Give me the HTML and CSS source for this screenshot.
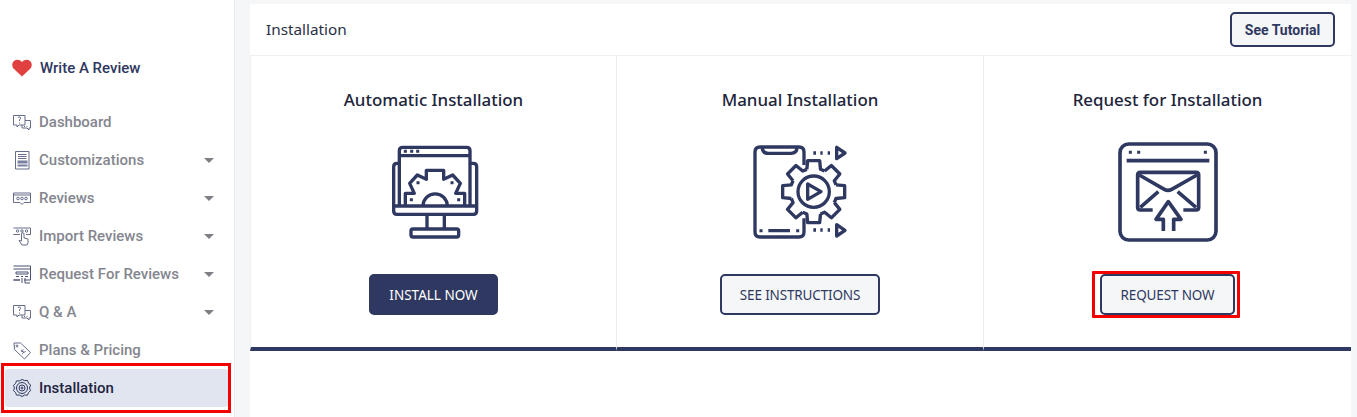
FILE: index.html
```html
<!DOCTYPE html>
<html lang="en">
<head>
<meta charset="utf-8">
<title>Installation</title>
<link rel="stylesheet" href="styles.css">
</head>
<body>
<aside class="sidebar">
  <a class="write-row">
    <svg class="heart" viewBox="0 0 20 18"><path d="M10 17.600 1.800 9.700C-.4 7.400-.1 3.800 2 2 4.300.1 7.700.400 10 3c2.300-2.600 5.700-2.900 8-1 2.100 1.800 2.400 5.400.2 7.700z"/></svg>
    <span>Write A Review</span>
  </a>
  <nav class="menu">
    <a class="item">
      <svg class="ico" viewBox="0 0 20 20"><path d="M1.500 3.500h11.500v9.500H7l-2 2v-2H1.500z"/><path d="M13 8.500h5.500V16H17v2l-2-2h-5v-3"/><path d="M6 6a1.300 1.300 0 1 1 1.500 1.500V9M7.500 10.500v1M12 14.500h1M14.500 14.500h1"/></svg>
      <span class="label">Dashboard</span>
    </a>
    <a class="item">
      <svg class="ico" viewBox="0 0 20 20"><path d="M3.500 1.500h13.500v17.500H3.500z"/><path d="M6 4.500h8.500M6 6.500h8.500M6 8.500h8.500"/><path class="fill" d="M5.500 10.500h10v3h-10zM5.500 14.500h10v2h-10z"/></svg>
      <span class="label">Customizations</span><i class="caret"></i>
    </a>
    <a class="item">
      <svg class="ico" viewBox="0 0 20 20"><path d="M1.500 5h17v9.500h-6.500L10 16.500 8 14.500H1.500z"/><path d="M1.500 7h17"/><circle cx="6" cy="10.500" r="1.300"/><circle cx="10" cy="10.500" r="1.300"/><circle cx="14" cy="10.500" r="1.300"/></svg>
      <span class="label">Reviews</span><i class="caret"></i>
    </a>
    <a class="item">
      <svg class="ico" viewBox="0 0 20 20"><path d="M1.500 2h17v6.500H14M8 8.500H1.500z"/><circle cx="5.500" cy="5" r="1.200"/><circle cx="10" cy="5" r="1.200"/><circle cx="14.500" cy="5" r="1.200"/><path d="M9.500 15V8a1.200 1.200 0 0 1 2.500 0v4l4 1v4l-1 2h-5l-3-4.500z"/></svg>
      <span class="label">Import Reviews</span><i class="caret"></i>
    </a>
    <a class="item">
      <svg class="ico ico-dark" viewBox="0 0 20 20"><path d="M1.500 2h17v14H12M8 16H1.500z"/><path d="M1.500 5h17"/><path d="M4 8h12v2H4zM4 12.500h3M9 12.500h2M13 12.500h3"/><path d="M10 14v5M13 14v5h5"/></svg>
      <span class="label">Request For Reviews</span><i class="caret"></i>
    </a>
    <a class="item">
      <svg class="ico" viewBox="0 0 20 20"><path d="M1.500 3.500h11.500v9.500H7l-2 2v-2H1.500z"/><path d="M13 8.500h5.500V16H17v2l-2-2h-5v-3"/><path d="M6 6a1.300 1.300 0 1 1 1.500 1.500V9M7.500 10.500v1M12 14.500h1M14.500 14.500h1"/></svg>
      <span class="label">Q &amp; A</span><i class="caret"></i>
    </a>
    <a class="item">
      <svg class="ico" viewBox="0 0 20 20"><path d="M2 3h6.500l10 9.500-6 6.500L2.500 9.500z"/><circle cx="5" cy="6" r="1"/><path d="M11.500 9.500 9 11l3 1-2 2M13.500 11.500l-2 1"/></svg>
      <span class="label">Plans &amp; Pricing</span>
    </a>
    <a class="item active">
      <svg class="ico" viewBox="0 0 20 20"><path d="M10 1.500l2.600 1.100 2.800-.2 1.100 2.600 2 2L17.500 10l1 2.600-2 2-1.100 2.600-2.800-.2L10 18.500 7.400 17l-2.800.2-1.100-2.600-2-2L2.500 10l-1-2.600 2-2 1.100-2.600 2.800.2z"/><circle cx="10" cy="10" r="5.500"/><circle cx="10" cy="10" r="3"/><circle cx="10" cy="10" r="1"/></svg>
      <span class="label">Installation</span>
    </a>
  </nav>
</aside>

<main class="content">
  <header class="topbar">
    <h1 class="page-title">Installation</h1>
    <a class="btn btn-tutorial">See Tutorial</a>
  </header>
  <section class="cards">
    <article class="card">
      <h2 class="card-title">Automatic Installation</h2>
      <svg class="art" viewBox="-6 0 390 360">
        <path d="M85 100H78Q68 100 68 110V243Q68 253 78 253H307Q317 253 317 243V110Q317 100 307 100H297"/>
        <path d="M85 228V62Q85 52 95 52H287Q297 52 297 62V228M85 77H297M68 228H317"/>
        <path class="dot" d="M103 64h.1M122 64h.1M140 64h.1M121 209h.1M263 209h.1M141 158h.1M243 158h.1"/>
        <path d="M103 228V190H130L116 160 139 135 166 148V121H218V148L245 135 268 160 254 190H281V228"/>
        <path d="M156 228A36.500 36.500 0 0 1 229 228"/>
        <path d="M168 253V297M220 253V297"/>
        <rect x="120" y="297" width="143" height="24" rx="6"/>
      </svg>
      <a class="btn btn-solid">INSTALL NOW</a>
    </article>
    <article class="card">
      <h2 class="card-title">Manual Installation</h2>
      <svg class="art" viewBox="0 0 390 360">
        <defs><path id="tooth" d="M-20.500-67-18-93H18L20.500-67 32.900-61.800"/></defs>
        <path d="M207 105V66Q207 51 192 51H75Q60 51 60 66V306Q60 321 75 321H192Q207 321 207 306V265"/>
        <path d="M82 52Q82 70 100 70H168Q186 70 186 52M100 302H165"/>
        <path class="dot" d="M78 302h.1M188 302h.1"/>
        <g transform="translate(236 185)">
          <use href="#tooth"/>
          <use href="#tooth" transform="rotate(45)"/>
          <use href="#tooth" transform="rotate(90)"/>
          <use href="#tooth" transform="rotate(135)"/>
          <use href="#tooth" transform="rotate(180)"/>
          <use href="#tooth" transform="rotate(225)"/>
          <use href="#tooth" transform="rotate(270)"/>
          <use href="#tooth" transform="rotate(315)"/>
          <circle r="47"/>
        </g>
        <path d="M218 162V208L258 185z"/>
        <path d="M235 69H243M256 69H263M278 69H285M235 300H243M256 300H263M278 300H285"/>
        <path d="M305 52V86L330 69zM305 284V318L330 301z"/>
      </svg>
      <a class="btn btn-outline">SEE INSTRUCTIONS</a>
    </article>
    <article class="card">
      <h2 class="card-title">Request for Installation</h2>
      <svg class="art art-thick" viewBox="6 0 390 360">
        <rect x="57" y="42" width="288" height="288" rx="26"/>
        <path d="M77 92H325"/>
        <path class="dot" d="M88 67h.1M113 67h.1M313 67h.1"/>
        <path d="M155 240H118Q110 240 110 232V135Q110 127 118 127H285Q293 127 293 135V232Q293 240 285 240H247"/>
        <path d="M115 135 190 178Q201 184 212 178L288 135M118 232 172 185M285 232 230 185"/>
        <path d="M187 303V268H165L202 215 240 268H218V303"/>
      </svg>
      <a class="btn btn-outline marked">REQUEST NOW</a>
    </article>
  </section>
</main>
</body>
</html>
```
FILE: styles.css
```css
*, *::before, *::after { box-sizing: border-box; }
html, body { height: 100%; }
body {
  margin: 0;
  display: flex;
  height: 417px;
  overflow: hidden;
  background: #f4f6f8;
  font-family: "Roboto", "Liberation Sans", sans-serif;
}

.sidebar {
  width: 235px;
  flex: none;
  background: #fff;
  border-right: 1px solid #e9ebef;
  padding: 49px 6px 0 5px;
}
.write-row {
  display: flex;
  align-items: center;
  height: 38px;
  padding-left: 7px;
  gap: 8px;
  font-size: 15px;
  font-weight: 500;
  color: #2e3660;
}
.heart { width: 20px; height: 18px; fill: #e0403f; }
.menu { margin-top: 16px; display: flex; flex-direction: column; }
.item {
  position: relative;
  display: flex;
  align-items: center;
  height: 38px;
  padding: 0 14px 0 7px;
  gap: 7px;
  font-size: 15px;
  font-weight: 500;
  color: #84868f;
}
.label { flex: 1; }
.ico {
  width: 20px;
  height: 20px;
  flex: none;
  fill: none;
  stroke: #666c8a;
  stroke-width: 1;
}
.ico-dark { stroke: #4a5173; }
.ico .fill { fill: #7a80a0; stroke: none; }
.caret {
  width: 0;
  height: 0;
  border-left: 5px solid transparent;
  border-right: 5px solid transparent;
  border-top: 5px solid #7f7f85;
}
.active {
  background: #e1e5f0;
  color: #1f2440;
  border-radius: 3px;
}
.active .ico { stroke: #2f3860; }
.active::before {
  content: "";
  position: absolute;
  left: -4px;
  top: -6px;
  width: 230px;
  height: 50px;
  border: 3px solid #f40000;
}

.content {
  width: 1101px;
  margin: 4px 0 0 15px;
  background: #fff;
  font-family: "Noto Sans", "Open Sans", sans-serif;
}
.topbar {
  height: 52px;
  display: flex;
  align-items: center;
  justify-content: space-between;
  padding: 0 16px;
  border-bottom: 1px solid #eef0f3;
}
.page-title {
  margin: 0 0 2px;
  font-size: 15.300px;
  font-weight: 400;
  color: #2a2f45;
}
.btn {
  display: inline-flex;
  align-items: center;
  justify-content: center;
  height: 41px;
  border: 2px solid #2f3860;
  border-radius: 5px;
  font-size: 13.500px;
}
.btn-tutorial {
  width: 105px;
  height: 35px;
  background: #f4f6f8;
  color: #2f3860;
  font-family: "Roboto", sans-serif;
  font-size: 14px;
  font-weight: 700;
}
.btn-solid { width: 129px; background: #2f3860; color: #fff; }
.btn-outline { width: 160px; background: #f4f6f8; color: #2f3860; letter-spacing: -.15px; }

.cards {
  display: grid;
  grid-template-columns: repeat(3, 1fr);
  height: 295px;
}
.card {
  display: flex;
  flex-direction: column;
  align-items: center;
  border-right: 1px solid #ebedf0;
  border-bottom: 4px solid #2f3860;
  padding-top: 32px;
}
.card:first-child { border-left: 1px solid #eef0f3; }
.card:last-child { border-right: 0; }
.card-title {
  margin: 0;
  height: 24px;
  line-height: 24px;
  font-size: 16.900px;
  font-weight: 500;
  color: #20243a;
}
.art {
  width: 130px;
  height: 120px;
  margin-top: 18px;
  margin-bottom: 24px;
  fill: none;
  stroke: #2f3860;
  stroke-width: 10;
  stroke-linejoin: round;
}
.art-thick { stroke-width: 11; }
.art .dot { stroke-width: 9; stroke-linecap: square; }
.marked { width: 135px; position: relative; }
.marked::after {
  content: "";
  position: absolute;
  left: -10px;
  top: -5px;
  width: 148px;
  height: 47px;
  border: 3px solid #f40000;
  border-radius: 1px;
}
```
